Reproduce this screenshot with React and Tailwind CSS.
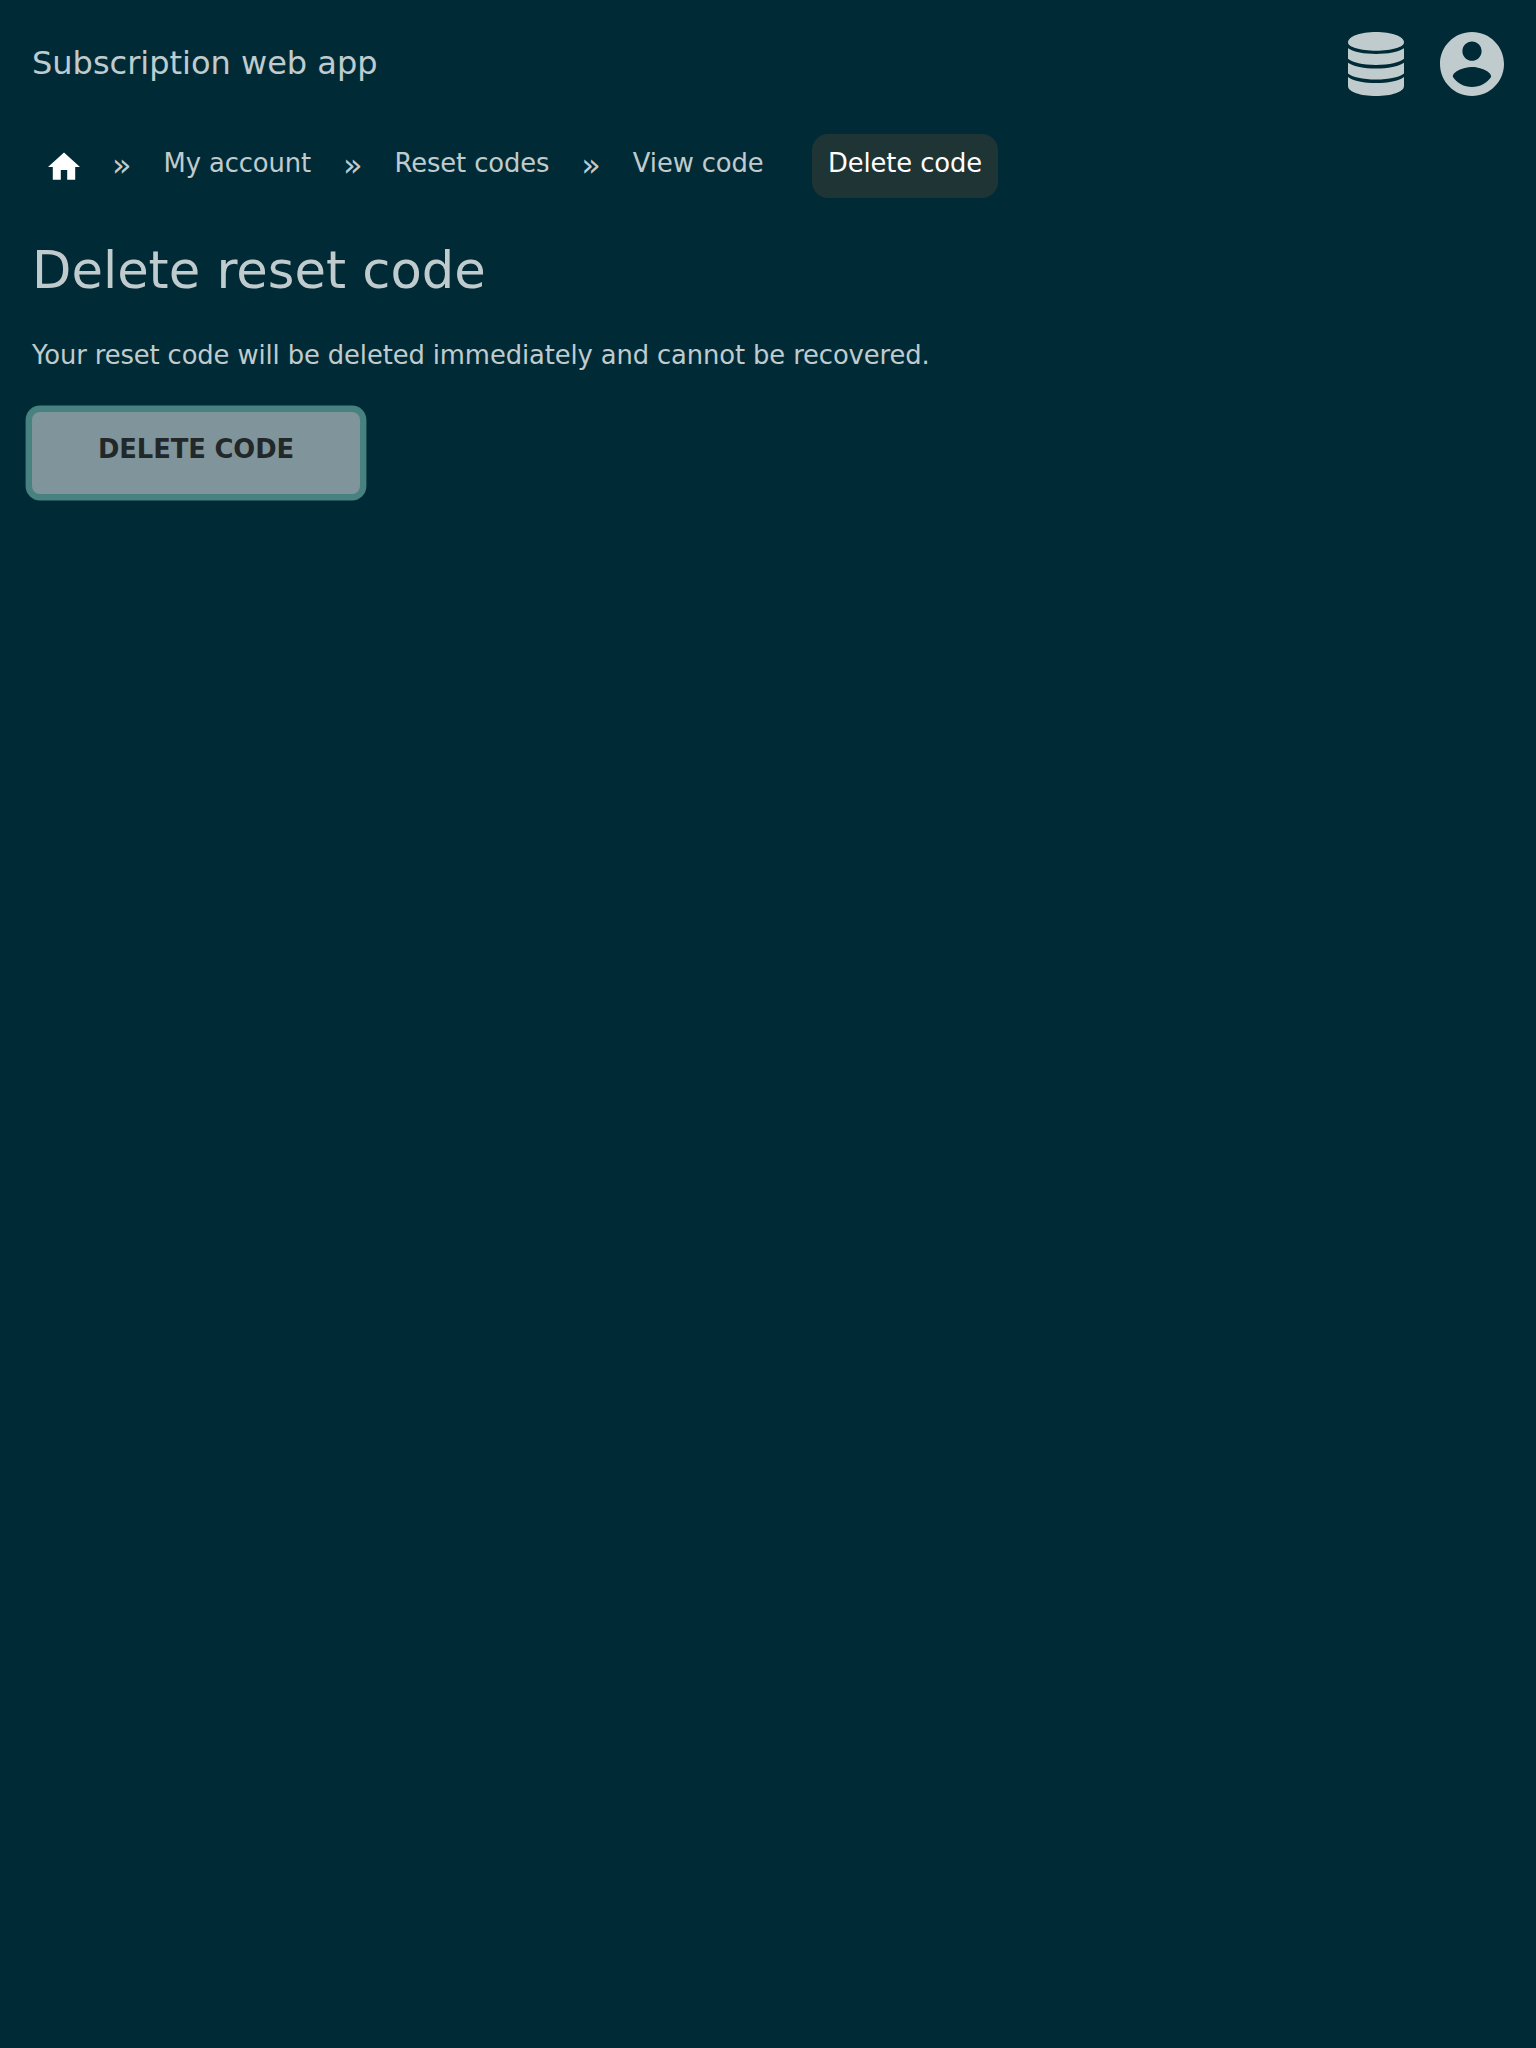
import React from "react";

function DatabaseIcon() {
  return (
    <svg className="h-16 w-14" viewBox="0 0 56 64" fill="currentColor">
      <path d="M28 0C43.500 0 56 4.200 56 10.500C56 15 43.500 18.700 28 18.700S0 15 0 10.500C0 4.200 12.500 0 28 0z" />
      <path d="M0 16.300C5.500 20 16 22 28 22S50.500 20 56 16.300V26.800C52 30.500 41 33 28 33S4 30.500 0 26.800z" />
      <path d="M0 30.700C5.500 34.500 16 36.500 28 36.500S50.500 34.500 56 30.700V41.500C52 45 41 47.500 28 47.500S4 45 0 41.500z" />
      <path d="M0 45C5.500 49 16 51 28 51S50.500 49 56 45V54C56 60 43.500 64 28 64S0 60 0 54z" />
    </svg>
  );
}

function AccountIcon() {
  return (
    <svg className="size-16" viewBox="2 2 20 20" fill="currentColor">
      <path d="M12 2C6.480 2 2 6.480 2 12s4.480 10 10 10 10-4.480 10-10S17.520 2 12 2zm0 3c1.660 0 3 1.340 3 3s-1.340 3-3 3-3-1.340-3-3 1.340-3 3-3zm0 14.200c-2.500 0-4.710-1.280-6-3.220.030-1.990 4-3.080 6-3.080 1.990 0 5.970 1.090 6 3.080-1.290 1.940-3.500 3.220-6 3.220z" />
    </svg>
  );
}

function HomeIcon() {
  return (
    <svg className="h-7 w-8" viewBox="2 3 20 17.5" fill="currentColor">
      <path d="M10 20.300v-6h4v6h5v-8h3L12 3.300 2 12.300h3v8z" />
    </svg>
  );
}

function Crumb({ children }) {
  return <a className="block h-16 px-4 pt-[11px] leading-9">{children}</a>;
}

function Separator() {
  return <span className="mx-4 block h-16 pt-[11px] text-[32px] leading-[40px] tracking-normal">»</span>;
}

export default function App() {
  return (
    <div className="min-h-[2048px] bg-[#002b36] font-['DejaVu_Sans',sans-serif] text-[25.8px] tracking-[-0.11px] text-[#c0cbce]">
      <header className="flex h-32 items-center justify-between px-8">
        <div className="-mt-0.5 text-[32px] tracking-normal">Subscription web app</div>
        <div className="flex items-center gap-9">
          <DatabaseIcon />
          <AccountIcon />
        </div>
      </header>
      <nav className="mt-[6px] flex h-16 px-8">
        <a className="block h-16 w-16 px-4 pt-[18px] text-white">
          <HomeIcon />
        </a>
        <Separator />
        <Crumb>My account</Crumb>
        <Separator />
        <Crumb>Reset codes</Crumb>
        <Separator />
        <Crumb>View code</Crumb>
        <span className="ml-[32.5px] block h-16 rounded-2xl bg-[#1f3434] px-4 pt-[11px] leading-9 text-white">Delete code</span>
      </nav>
      <main className="px-8">
        <h1 className="mt-10 text-[51.2px] leading-[64px] tracking-normal">Delete reset code</h1>
        <p className="mt-[33px] leading-[40px]">Your reset code will be deleted immediately and cannot be recovered.</p>
        <button className="mt-[37px] block h-[82px] w-[328px] rounded-lg bg-[#80949b] pb-2 font-bold text-[#222829] ring-[6.4px] ring-[#488280]">DELETE CODE</button>
      </main>
    </div>
  );
}
